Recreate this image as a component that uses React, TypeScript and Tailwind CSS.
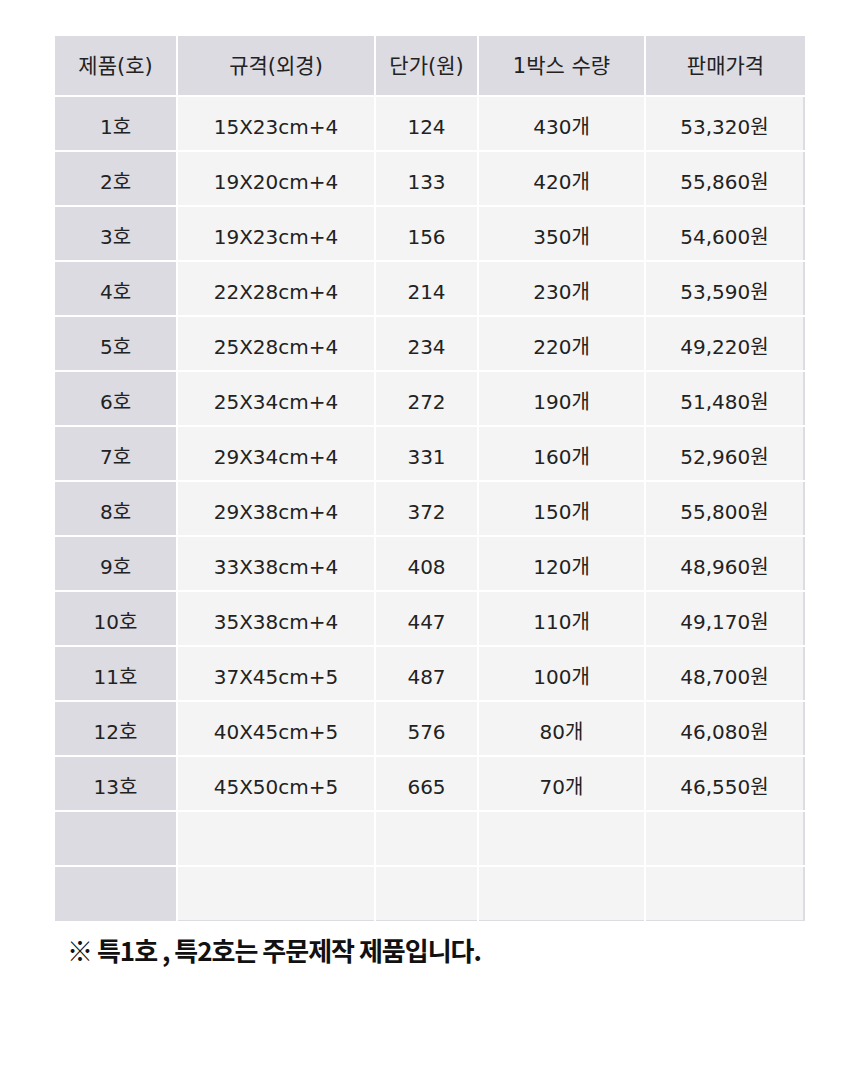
import React from "react";

const rows = [
  ["1호", "15X23cm+4", "124", "430개", "53,320원"],
  ["2호", "19X20cm+4", "133", "420개", "55,860원"],
  ["3호", "19X23cm+4", "156", "350개", "54,600원"],
  ["4호", "22X28cm+4", "214", "230개", "53,590원"],
  ["5호", "25X28cm+4", "234", "220개", "49,220원"],
  ["6호", "25X34cm+4", "272", "190개", "51,480원"],
  ["7호", "29X34cm+4", "331", "160개", "52,960원"],
  ["8호", "29X38cm+4", "372", "150개", "55,800원"],
  ["9호", "33X38cm+4", "408", "120개", "48,960원"],
  ["10호", "35X38cm+4", "447", "110개", "49,170원"],
  ["11호", "37X45cm+5", "487", "100개", "48,700원"],
  ["12호", "40X45cm+5", "576", "80개", "46,080원"],
  ["13호", "45X50cm+5", "665", "70개", "46,550원"],
  ["", "", "", "", ""],
  ["", "", "", "", ""],
];

const headers = ["제품(호)", "규격(외경)", "단가(원)", "1박스 수량", "판매가격"];

export default function App() {
  return (
    <div
      className="w-[860px] h-[1073px] bg-white text-[#222] pt-9 pl-[55px]"
      style={{ fontFamily: '"DejaVu Sans", "Noto Sans CJK KR", sans-serif' }}
    >
      <div className="w-[750px] grid grid-cols-[121px_196px_101px_165px_159px] gap-[2px] text-[20px]">
        {headers.map((h) => (
          <div key={h} className="h-[59px] bg-[#dcdbe2] flex items-center justify-center pt-[2px] text-[21px]">
            {h}
          </div>
        ))}
        {rows.map((r, i) =>
          r.map((c, j) => {
            const last = i === rows.length - 1;
            let cls = "flex items-center justify-center pt-[6px] ";
            cls += last ? "h-[54px]" : "h-[53px]";
            if (j === 0) cls += " bg-[#dcdbe2]";
            else cls += " bg-[#f4f4f4]";
            if (j > 0 && last) cls += " border-b border-[#dcdce2]";
            if (j === 4) cls += " border-r-2 border-r-[#dcdce2]";
            return (
              <div key={i + "-" + j} className={cls}>
                {c}
              </div>
            );
          })
        )}
      </div>
      <p
        className="mt-[9px] ml-[12px] text-[26px] font-bold tracking-[-1px] text-[#111]"
        style={{ fontFamily: '"Noto Sans CJK KR", sans-serif' }}
      >
        ※ 특1호 , 특2호는 주문제작 제품입니다.
      </p>
    </div>
  );
}
